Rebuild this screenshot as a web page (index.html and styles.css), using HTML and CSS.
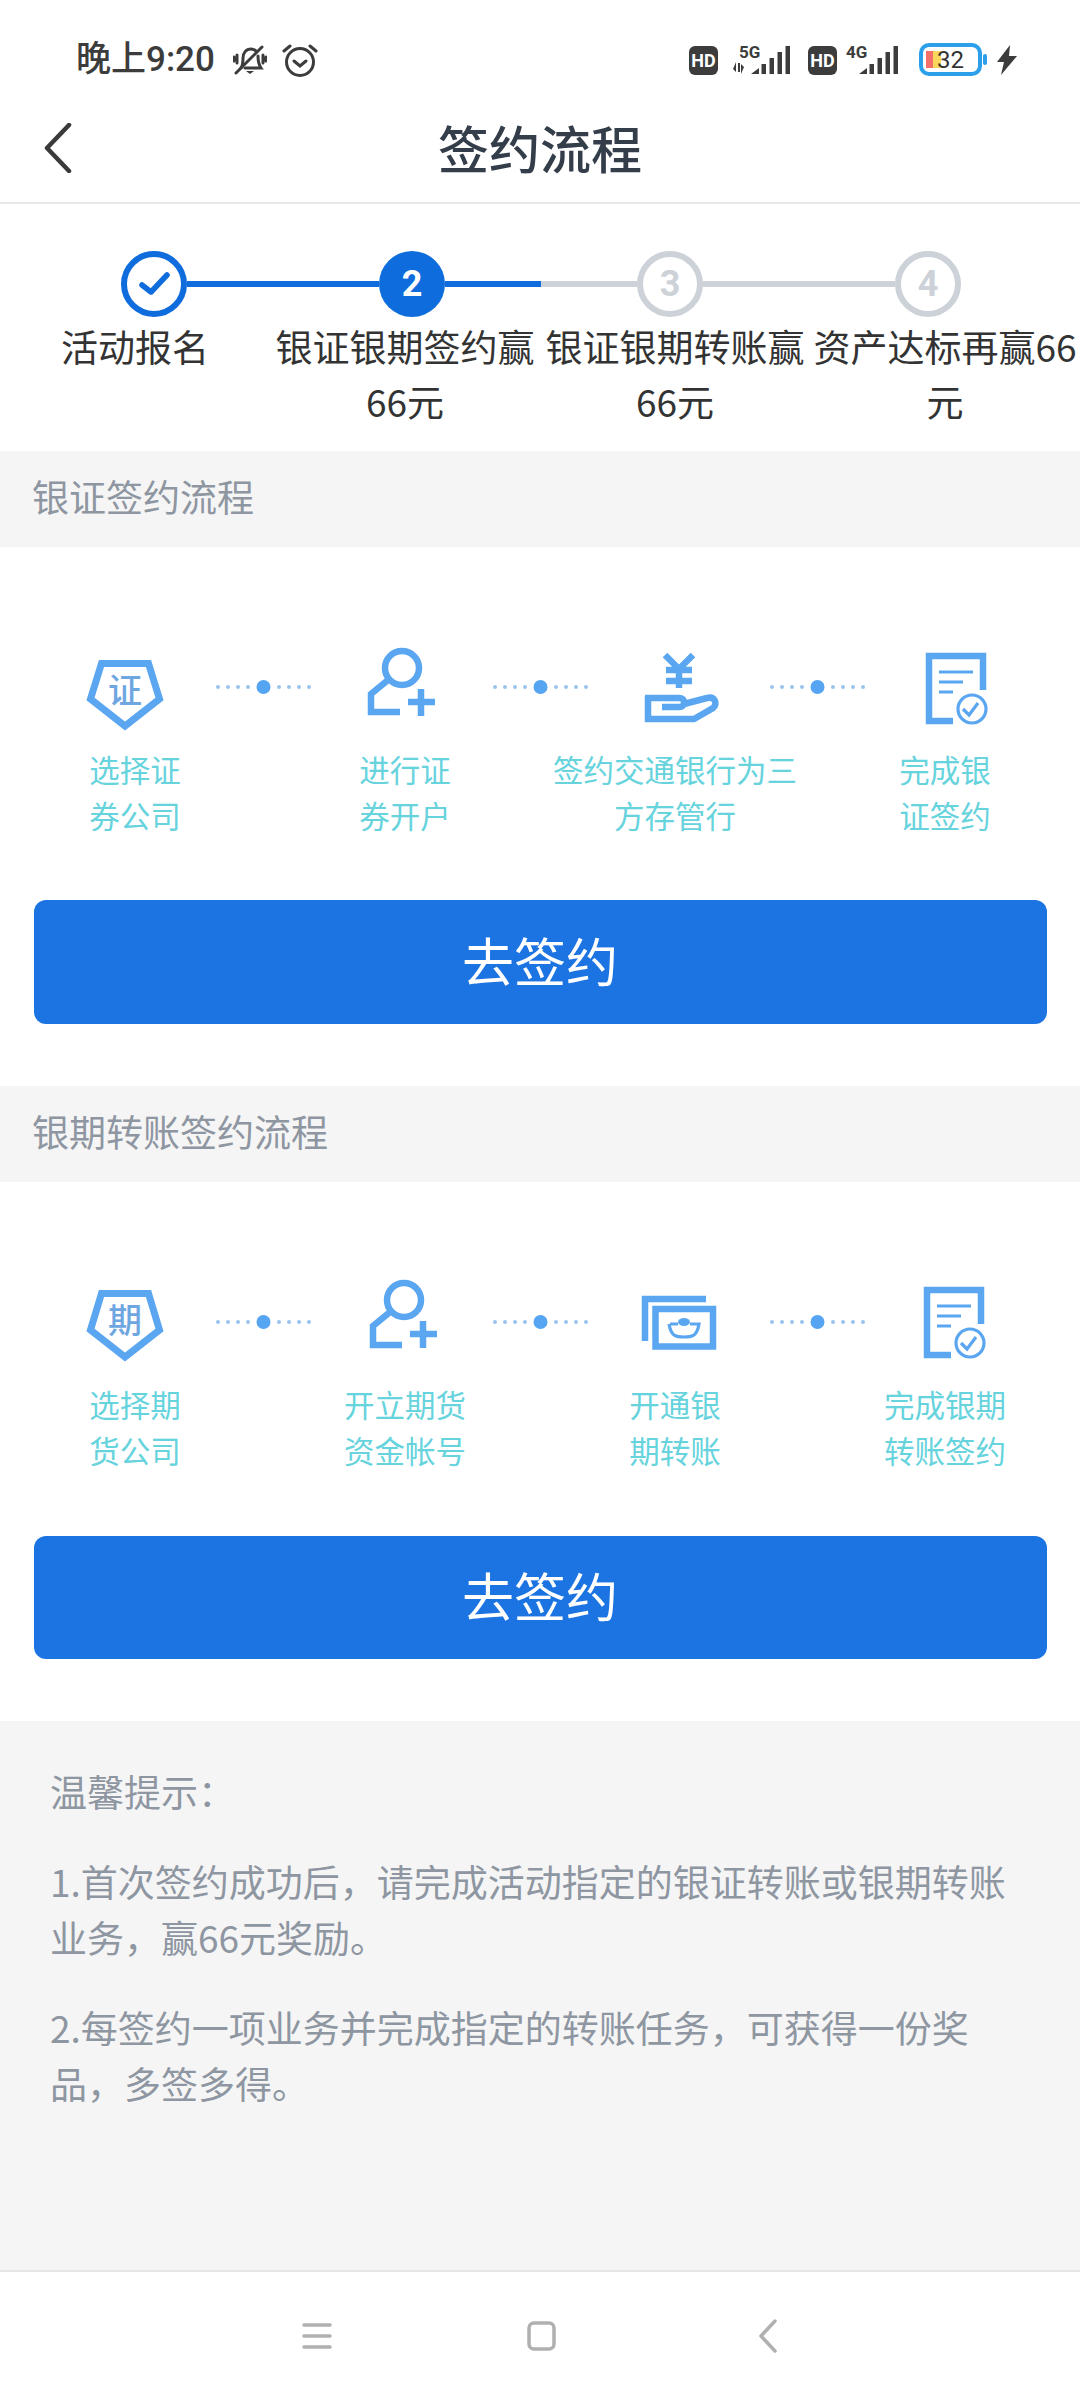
FILE: index.html
```html
<!DOCTYPE html>
<html lang="zh">
<head>
<meta charset="utf-8">
<title>签约流程</title>
<link rel="stylesheet" href="styles.css">
</head>
<body>
<div class="page">
  <div class="status">
    <div class="status-left">
      <span class="time">晚上9:20</span>
      <svg class="si-bell" width="34" height="34" viewBox="0 0 34 34"><path class="ln" d="M8 25c2-3 2-5 2-10 0-5 3-9 8-9 2 0 4 1 5 2M25 13c0 6 1 9 3 12H12"/><path class="ln" d="M3 30 29 4"/><path class="ln" d="M4 12v8M1 14v4M30 12v8M33 14v4"/><path class="fl" d="M13 28h8l-4 3z"/></svg>
      <svg class="si-alarm" width="36" height="36" viewBox="0 0 36 36"><circle class="ln" cx="18" cy="20" r="13.5"/><path class="ln" d="M12 19l6 5 6-5M2 9l6-5M34 9l-6-5"/></svg>
    </div>
    <div class="status-right">
      <span class="hd">HD</span>
      <svg class="si-sig" width="60" height="34" viewBox="0 0 60 34"><text x="6" y="15" class="net">5G</text><path class="fl" d="M3 19v10l-3-3zM8 31V21l3 3zM5 20h2v9H5z"/><path class="fl" d="M18 31l8-6v6zM28.500 21h4.500v10h-4.500zM36.500 15h4.500v16h-4.500zM44.500 9h4.500v22h-4.500zM52.500 3h4.500v28h-4.500z"/></svg>
      <span class="hd hd-2">HD</span>
      <svg class="si-sig si-sig-2" width="54" height="34" viewBox="0 0 54 34"><text x="0" y="15" class="net">4G</text><path class="fl" d="M13 31l8-6v6zM23.500 21h4.500v10h-4.500zM31.500 15h4.500v16h-4.500zM39.500 9h4.500v22h-4.500zM47.500 3h4.500v28h-4.500z"/></svg>
      <svg class="si-bat" width="70" height="34" viewBox="0 0 70 34"><rect x="2" y="2" width="59" height="29" rx="8" fill="#fff" stroke="#2b9fea" stroke-width="4"/><rect x="7" y="8" width="7" height="17" fill="#f56f6a"/><rect x="14" y="8" width="8" height="17" fill="#f9d65c"/><text x="18" y="25" class="batn">32</text><rect x="64" y="11" width="4" height="11" rx="2" fill="#2b9fea"/></svg>
      <svg class="si-bolt" width="20" height="30" viewBox="0 0 20 30"><path class="fl" d="M13 0 0 17h7L4 30 20 11h-8z"/></svg>
    </div>
  </div>

  <header class="topbar">
    <svg class="back" width="28" height="50" viewBox="0 0 28 50"><path d="M25 2 3 25l22 23"/></svg>
    <h1 class="title">签约流程</h1>
  </header>

  <section class="stepper">
    <div class="track">
      <div class="node node-done"><svg width="54" height="54" viewBox="0 0 54 54"><path d="M15 28l9 7 16-17"/></svg></div>
      <div class="line line-blue"></div>
      <div class="node node-on">2</div>
      <div class="line line-half"></div>
      <div class="node node-off">3</div>
      <div class="line line-grey"></div>
      <div class="node node-off">4</div>
    </div>
    <div class="step-labels">
      <div class="step-label">活动报名</div>
      <div class="step-label">银证银期签约赢66元</div>
      <div class="step-label">银证银期转账赢66元</div>
      <div class="step-label">资产达标再赢66元</div>
    </div>
  </section>

  <h2 class="bar">银证签约流程</h2>
  <section class="flow">
    <div class="icons">
      <div class="slot"><svg class="ic" width="90" height="90" viewBox="0 0 90 90"><polygon class="st7" points="21.500,21.500 68.500,21.500 79.500,57 45,84 10.500,57"/><text x="45" y="61" class="seal">证</text></svg></div>
      <svg class="dots" width="95" height="16" viewBox="0 0 95 16"><g class="sm"><circle cx="2" cy="8" r="2"/><circle cx="12" cy="8" r="2"/><circle cx="22" cy="8" r="2"/><circle cx="32" cy="8" r="2"/><circle cx="63" cy="8" r="2"/><circle cx="73" cy="8" r="2"/><circle cx="83" cy="8" r="2"/><circle cx="93" cy="8" r="2"/></g><circle class="bg" cx="47.5" cy="8" r="7"/></svg>
      <div class="slot"><svg class="ic" width="90" height="90" viewBox="0 0 90 90"><circle class="st6" cx="45" cy="26" r="17"/><path class="st6" d="M31 38 14 52v18h29M51 60h27M64 47v27"/></svg></div>
      <svg class="dots" width="95" height="16" viewBox="0 0 95 16"><g class="sm"><circle cx="2" cy="8" r="2"/><circle cx="12" cy="8" r="2"/><circle cx="22" cy="8" r="2"/><circle cx="32" cy="8" r="2"/><circle cx="63" cy="8" r="2"/><circle cx="73" cy="8" r="2"/><circle cx="83" cy="8" r="2"/><circle cx="93" cy="8" r="2"/></g><circle class="bg" cx="47.5" cy="8" r="7"/></svg>
      <div class="slot"><svg class="ic" width="90" height="90" viewBox="0 0 90 90"><path class="st6" d="M31 13l14 14 14-14M45 27v19M32 28h26M32 39h26"/><path class="st6" d="M14 54v23h46l19-11c5-4 2-12-6-10l-23 6M11 56h34c7 0 7 9 0 9H28"/></svg></div>
      <svg class="dots" width="95" height="16" viewBox="0 0 95 16"><g class="sm"><circle cx="2" cy="8" r="2"/><circle cx="12" cy="8" r="2"/><circle cx="22" cy="8" r="2"/><circle cx="32" cy="8" r="2"/><circle cx="63" cy="8" r="2"/><circle cx="73" cy="8" r="2"/><circle cx="83" cy="8" r="2"/><circle cx="93" cy="8" r="2"/></g><circle class="bg" cx="47.5" cy="8" r="7"/></svg>
      <div class="slot"><svg class="ic" width="90" height="90" viewBox="0 0 90 90"><path class="st6" d="M42 79H18V14h54v34"/><path class="st3" d="M28 30h34M28 40h24M28 50h14M52 67l6 6 9-12"/><circle class="st3" cx="61" cy="67" r="14"/></svg></div>
    </div>
    <div class="labels">
      <div class="label">选择证<br>券公司</div>
      <div class="label">进行证<br>券开户</div>
      <div class="label">签约交通银行为三<br>方存管行</div>
      <div class="label">完成银<br>证签约</div>
    </div>
    <button class="go">去签约</button>
  </section>

  <h2 class="bar">银期转账签约流程</h2>
  <section class="flow flow-2">
    <div class="icons">
      <div class="slot"><svg class="ic" width="90" height="90" viewBox="0 0 90 90"><polygon class="st7" points="21.500,16.500 68.500,16.500 79.500,53 45,80 10.500,53"/><text x="45" y="56" class="seal">期</text></svg></div>
      <svg class="dots" width="95" height="16" viewBox="0 0 95 16"><g class="sm"><circle cx="2" cy="8" r="2"/><circle cx="12" cy="8" r="2"/><circle cx="22" cy="8" r="2"/><circle cx="32" cy="8" r="2"/><circle cx="63" cy="8" r="2"/><circle cx="73" cy="8" r="2"/><circle cx="83" cy="8" r="2"/><circle cx="93" cy="8" r="2"/></g><circle class="bg" cx="47.5" cy="8" r="7"/></svg>
      <div class="slot"><svg class="ic" width="90" height="90" viewBox="0 0 90 90"><circle class="st6" cx="47" cy="23" r="17"/><path class="st6" d="M33 35 16 49v19h29M53 57h27M66 44v27"/></svg></div>
      <svg class="dots" width="95" height="16" viewBox="0 0 95 16"><g class="sm"><circle cx="2" cy="8" r="2"/><circle cx="12" cy="8" r="2"/><circle cx="22" cy="8" r="2"/><circle cx="32" cy="8" r="2"/><circle cx="63" cy="8" r="2"/><circle cx="73" cy="8" r="2"/><circle cx="83" cy="8" r="2"/><circle cx="93" cy="8" r="2"/></g><circle class="bg" cx="47.5" cy="8" r="7"/></svg>
      <div class="slot"><svg class="ic" width="90" height="90" viewBox="0 0 90 90"><path class="st6" d="M72 22H11v42"/><rect class="st6" x="21.5" y="32" width="57.5" height="37.5"/><path class="st3" d="M36 47h8M56 47h9c-2 13-8 13-15 13s-13 0-15-13"/><ellipse class="bf" cx="50" cy="45" rx="6" ry="4"/></svg></div>
      <svg class="dots" width="95" height="16" viewBox="0 0 95 16"><g class="sm"><circle cx="2" cy="8" r="2"/><circle cx="12" cy="8" r="2"/><circle cx="22" cy="8" r="2"/><circle cx="32" cy="8" r="2"/><circle cx="63" cy="8" r="2"/><circle cx="73" cy="8" r="2"/><circle cx="83" cy="8" r="2"/><circle cx="93" cy="8" r="2"/></g><circle class="bg" cx="47.5" cy="8" r="7"/></svg>
      <div class="slot"><svg class="ic" width="90" height="90" viewBox="0 0 90 90"><path class="st6" d="M40 78H16V13h54v34"/><path class="st3" d="M26 29h34M26 39h24M26 49h14M50 66l6 6 9-12"/><circle class="st3" cx="59" cy="66" r="14"/></svg></div>
    </div>
    <div class="labels">
      <div class="label">选择期<br>货公司</div>
      <div class="label">开立期货<br>资金帐号</div>
      <div class="label">开通银<br>期转账</div>
      <div class="label">完成银期<br>转账签约</div>
    </div>
    <button class="go">去签约</button>
  </section>

  <section class="tips">
    <p class="tip-head">温馨提示：</p>
    <p class="tip">1.首次签约成功后，请完成活动指定的银证转账或银期转账业务，赢66元奖励。</p>
    <p class="tip">2.每签约一项业务并完成指定的转账任务，可获得一份奖品，多签多得。</p>
  </section>

  <nav class="navbar">
    <svg width="30" height="30" viewBox="0 0 30 30"><path d="M2 4h26M2 15h26M2 26h26"/></svg>
    <svg width="30" height="32" viewBox="0 0 30 32"><rect x="2" y="3" width="25" height="26" rx="5"/></svg>
    <svg class="nav-back" width="20" height="34" viewBox="0 0 20 34"><path d="M17 2 3 17l14 15"/></svg>
  </nav>
</div>
</body>
</html>
```

FILE: styles.css
```css
* { box-sizing: border-box; }
html, body { margin: 0; padding: 0; background: #fff; }
body { font-family: "Noto Sans CJK SC", "Noto Sans", sans-serif; }
.page { width: 1080px; height: 2400px; overflow: hidden; display: flex; flex-direction: column; }

/* status bar */
.status { height: 100px; flex: none; padding: 30px 63px 10px 76px; display: flex; justify-content: space-between; align-items: center; color: #3c3c3c; }
.status-left, .status-right { display: flex; align-items: center; }
.time { font-size: 35px; font-weight: 500; line-height: 40px; font-family: "Roboto", "Noto Sans CJK SC", sans-serif; width: 157px; }
.si-alarm { margin-left: 15px; }
.ln { fill: none; stroke: #3c3c3c; stroke-width: 3; stroke-linecap: round; }
.fl { fill: #3c3c3c; }
.hd { width: 29px; height: 29px; border-radius: 6px; background: #3c3c3c; color: #fff; font: 700 18px/29px "Roboto", sans-serif; text-align: center; }
.si-sig { margin-left: 15px; }
.hd-2 { margin-left: 15px; }
.si-sig-2 { margin-left: 9px; }
.net { font: 700 17px "Roboto", sans-serif; fill: #3c3c3c; }
.batn { font: 400 24px "Roboto", sans-serif; fill: #333; }
.si-bat { margin-left: 19px; }
.si-bolt { margin-left: 8px; }

/* title bar */
.topbar { height: 104px; flex: none; border-bottom: 2px solid #e8e8e8; position: relative; display: flex; align-items: center; justify-content: center; }
.title { margin: 0 0 8px; font-size: 51px; line-height: 70px; font-weight: 500; color: #343d4a; }
.back { position: absolute; left: 44px; top: 23px; }
.back path { fill: none; stroke: #3a3a3a; stroke-width: 4.5; stroke-linecap: round; stroke-linejoin: round; }

/* stepper */
.stepper { height: 247px; flex: none; padding-top: 47px; }
.track { display: flex; align-items: center; padding-left: 121px; height: 66px; }
.node { width: 66px; height: 66px; border-radius: 50%; flex: none; display: flex; align-items: center; justify-content: center; font: 700 36px/1 "Roboto", sans-serif; }
.node-done { border: 6px solid #0e6cdc; }
.node-done svg { fill: none; stroke: #0e6cdc; stroke-width: 5.5; stroke-linecap: round; stroke-linejoin: round; }
.node-on { background: #0e6cdc; color: #fff; }
.node-off { border: 6px solid #cdd2d8; color: #cdd2d8; }
.line { width: 192px; height: 6px; flex: none; }
.line-blue { background: #0e6cdc; }
.line-grey { background: #cdd2d8; }
.line-half { background: linear-gradient(to right, #0e6cdc 0 96px, #cdd2d8 96px); }
.step-labels { display: grid; grid-template-columns: repeat(4, 270px); margin-top: 2px; }
.step-label { font-size: 37px; line-height: 55px; color: #333; text-align: center; }

/* section bar */
.bar { height: 96px; flex: none; margin: 0; padding-left: 32px; background: #f5f5f6; font-size: 37px; line-height: 90px; font-weight: 400; color: #8e96a1; }

/* flow */
.flow { height: 539px; flex: none; padding-top: 95px; }
.icons { display: flex; align-items: center; padding-left: 34px; height: 90px; }
.slot { width: 182px; height: 90px; display: flex; justify-content: center; flex: none; }
.dots { flex: none; }
.sm { fill: #9cc3ee; }
.bg { fill: #56a5f2; }
.st6 { fill: none; stroke: #5ba6f0; stroke-width: 6.5; }
.st7 { fill: none; stroke: #5ba6f0; stroke-width: 7; }
.st3 { fill: none; stroke: #5ba6f0; stroke-width: 3.2; }
.bf { fill: #5ba6f0; }
.seal { font-size: 34px; font-weight: 500; fill: #6ea6e2; text-anchor: middle; font-family: "Noto Sans CJK SC", sans-serif; }
.labels { display: grid; grid-template-columns: repeat(4, 270px); margin-top: 14px; }
.label { font-size: 30.5px; line-height: 46px; color: #66d3dd; text-align: center; }
.go { display: block; width: 1013px; height: 124px; margin: 62px auto 0; padding: 0 0 6px; border: 0; border-radius: 12px; background: #1c74e3; color: #fff; font-family: inherit; font-size: 52px; }
.flow-2 .go { height: 123px; margin-top: 63px; }

/* tips */
.tips { flex: 1; background: #f5f5f6; padding: 0 50px; color: #8e96a1; font-size: 37px; line-height: 56px; }
.tip-head { margin: 42px 0 0; }
.tip { margin: 34px 0 0; }

/* nav */
.navbar { height: 130px; flex: none; border-top: 2px solid #e6e6e6; padding-left: 302px; gap: 195px; display: flex; align-items: center; }
.navbar svg { flex: none; }
.navbar path, .navbar rect { fill: none; stroke: #b0b0b0; stroke-width: 3.5; stroke-linecap: round; stroke-linejoin: round; }
.navbar .nav-back { margin-left: 6px; }
```
